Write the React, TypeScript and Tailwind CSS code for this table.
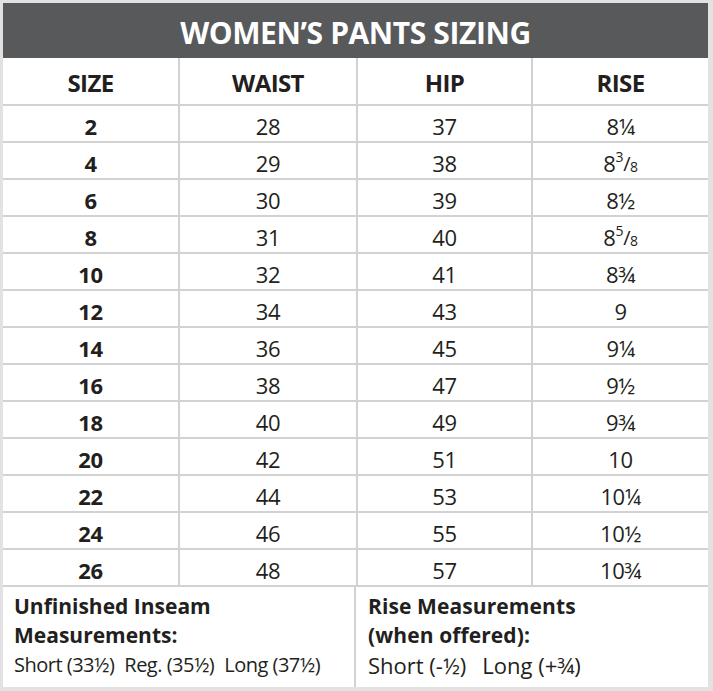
import React from "react";

const Frac = ({ n, d }: { n: string; d: string }) => (
  <>
    <span className="text-[14px] relative -top-[7px]">{n}</span>
    <span className="text-[20px]">/</span>
    <span className="text-[14px] relative top-[3px]">{d}</span>
  </>
);

const rows: [string, string, string, React.ReactNode][] = [
  ["2", "28", "37", "8¼"],
  ["4", "29", "38", <>8<Frac n="3" d="8" /></>],
  ["6", "30", "39", "8½"],
  ["8", "31", "40", <>8<Frac n="5" d="8" /></>],
  ["10", "32", "41", "8¾"],
  ["12", "34", "43", "9"],
  ["14", "36", "45", "9¼"],
  ["16", "38", "47", "9½"],
  ["18", "40", "49", "9¾"],
  ["20", "42", "51", "10"],
  ["22", "44", "53", "10¼"],
  ["24", "46", "55", "10½"],
  ["26", "48", "57", "10¾"],
];

const font = { fontFamily: '"Open Sans", "Noto Sans", sans-serif' };

export default function App() {
  return (
    <div
      className="w-[713px] h-[691px] bg-[#e2e2e2] pt-[3px] pl-[3px] pr-[5px] pb-[4px] text-[#231f20]"
      style={font}
    >
      <div className="bg-white h-full flex flex-col">
        <div className="h-[55px] shrink-0 bg-[#58595b] flex items-center justify-center pt-[3px] text-white font-bold text-[30px] tracking-[-0.4px]">
          WOMEN’S PANTS SIZING
        </div>
        <div className="grid grid-cols-[177px_178px_175px_1fr] h-[48px] shrink-0 border-b-2 border-[#d2d2d2] font-bold text-[24px] tracking-[-0.6px]">
          {["SIZE", "WAIST", "HIP", "RISE"].map((h, i) => (
            <div
              key={h}
              className={`flex items-center justify-center pt-[4px] ${i < 3 ? "border-r-2 border-[#d2d2d2]" : ""}`}
            >
              {h}
            </div>
          ))}
        </div>
        {rows.map((r) => (
          <div
            key={r[0]}
            className="grid grid-cols-[177px_178px_175px_1fr] h-[37px] shrink-0 border-b-2 border-[#d2d2d2] text-[22px] tracking-[-0.4px]"
          >
            <div className="flex items-center justify-center pt-[4px] border-r-2 border-[#d2d2d2] font-bold">{r[0]}</div>
            <div className="flex items-center justify-center pt-[4px] border-r-2 border-[#d2d2d2]">{r[1]}</div>
            <div className="flex items-center justify-center pt-[4px] border-r-2 border-[#d2d2d2]">{r[2]}</div>
            <div className="flex items-center justify-center pt-[4px]">{r[3]}</div>
          </div>
        ))}
        <div className="flex-1 grid grid-cols-[353px_1fr]">
          <div className="border-r-2 border-[#d2d2d2] pl-[11px] pt-[5px]">
            <div className="font-bold text-[21px] leading-[29px] tracking-[0px]">
              Unfinished Inseam
              <br />
              Measurements:
            </div>
            <div className="flex gap-[10px] text-[20px] leading-[28px] tracking-[-0.5px] mt-[1px] whitespace-nowrap">
              <span>Short (33½)</span>
              <span>Reg. (35½)</span>
              <span>Long (37½)</span>
            </div>
          </div>
          <div className="pl-[12px] pt-[5px]">
            <div className="font-bold text-[21px] leading-[29px] tracking-[0.1px]">
              Rise Measurements
              <br />
              (when offered):
            </div>
            <div className="flex gap-[16px] text-[22px] leading-[30px] tracking-[0px] whitespace-nowrap">
              <span>Short (-½)</span>
              <span>Long (+¾)</span>
            </div>
          </div>
        </div>
      </div>
    </div>
  );
}
